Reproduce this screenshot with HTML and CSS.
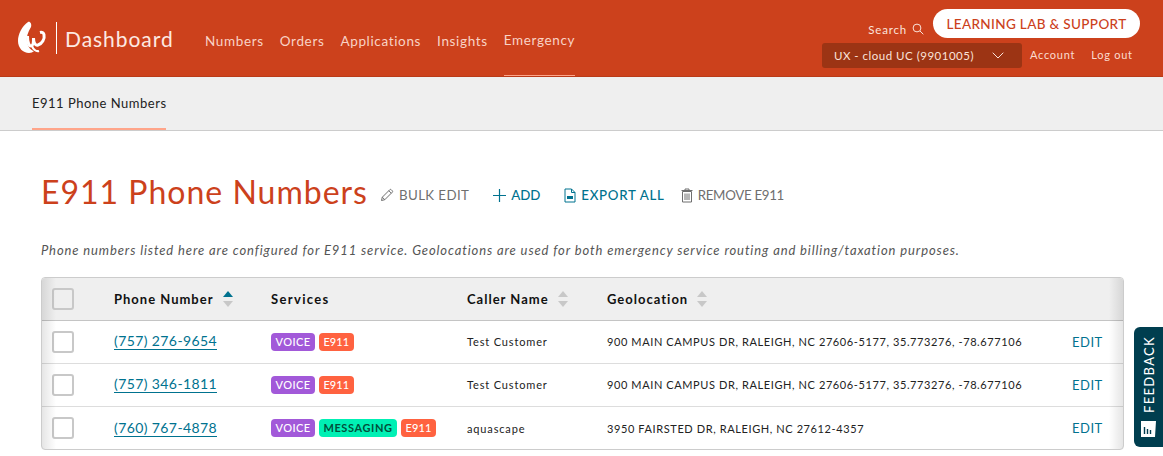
FILE: index.html
```html
<!DOCTYPE html>
<html lang="en">
<head>
<meta charset="utf-8">
<title>E911 Phone Numbers</title>
<link rel="stylesheet" href="styles.css">
</head>
<body>
<header class="topbar">
  <div class="brand">
    <svg class="logo" viewBox="0 0 30 34" width="30" height="34" aria-hidden="true">
      <path d="M10 1C4 5 0 13 0 20c0 7 5 12 11 12 2 0 4-1 5-2-3-.5-6-4-7-9-1-5 1-10 4-15 1-3-1-6-3-5z" fill="#fff"/>
      <path d="M9.500 15c0 6 1.500 10 3.500 10s2.500-5 2.500-8c0 4 1.500 8 4.500 7 4-1 7-6 6-10.500-.4-1.800-2-2.500-4-2" fill="none" stroke="#fff" stroke-width="3"/>
      <path d="M14 25c1 3 4 6 7 5" fill="none" stroke="#fff" stroke-width="2.200"/>
    </svg>
    <span class="brand-rule"></span>
    <span class="brand-name">Dashboard</span>
  </div>
  <nav class="mainnav">
    <a class="navlink">Numbers</a>
    <a class="navlink">Orders</a>
    <a class="navlink">Applications</a>
    <a class="navlink">Insights</a>
    <a class="navlink navlink-active">Emergency</a>
  </nav>
  <div class="utility">
    <div class="utility-top">
      <span class="search">Search
        <svg viewBox="0 0 12 12" width="12" height="12" aria-hidden="true"><circle cx="5" cy="5" r="3.900" fill="none" stroke="#fbe3da" stroke-width="1"/><path d="M8 8l3.300 3.300" stroke="#fbe3da" stroke-width="1" fill="none"/></svg>
      </span>
      <a class="support">LEARNING LAB &amp; SUPPORT</a>
    </div>
    <div class="utility-bottom">
      <div class="account-select">
        <span>UX - cloud UC (9901005)</span>
        <svg viewBox="0 0 12 7" width="12" height="7" aria-hidden="true"><path d="M.7.7L6 6l5.300-5.300" fill="none" stroke="#fbe3da" stroke-width="1"/></svg>
      </div>
      <a class="utility-link">Account</a>
      <a class="utility-link">Log out</a>
    </div>
  </div>
</header>
<div class="subnav"><a class="subnav-item">E911 Phone Numbers</a></div>
<main class="content">
  <div class="title-row">
    <h1 class="title">E911 Phone Numbers</h1>
    <a class="action action-grey action-bulk">
      <svg viewBox="0 0 14 14" width="14" height="14" aria-hidden="true"><path d="M1.500 12.500l.8-3.300L9.800 1.700a1 1 0 0 1 1.400 0l1.100 1.100a1 1 0 0 1 0 1.400L4.800 11.700zM2.300 9.200l2.500 2.500M8.800 2.700l2.500 2.500" fill="none" stroke="#6f6f6f"/></svg>
      BULK EDIT</a>
    <a class="action action-teal action-add">
      <svg viewBox="0 0 13 13" width="13" height="13" aria-hidden="true"><path d="M6.500 0v13M0 6.500h13" stroke="#00728f" stroke-width="1.200"/></svg>
      ADD</a>
    <a class="action action-teal action-export">
      <svg viewBox="0 0 12 15" width="12" height="15" aria-hidden="true"><path d="M1 1h6.500L11 4.500V14H1zM7.500 1v3.500H11" fill="none" stroke="#00728f"/><path d="M3 8h6v3H3z" fill="#00728f"/></svg>
      EXPORT ALL</a>
    <a class="action action-grey action-remove">
      <svg viewBox="0 0 12 15" width="12" height="15" aria-hidden="true"><path d="M1.500 3.500h9V14h-9zM.5 2.500h11M4 2.500V1h4v1.500M4 5.500V12M6 5.500V12M8 5.500V12" fill="none" stroke="#6f6f6f"/></svg>
      REMOVE E911</a>
  </div>
  <p class="intro">Phone numbers listed here are configured for E911 service. Geolocations are used for both emergency service routing and billing/taxation purposes.</p>
  <div class="table">
    <div class="row row-head">
      <div class="cell-check"><span class="checkbox checkbox-head"></span></div>
      <div class="cell-phone">Phone Number <span class="sort sort-asc"></span></div>
      <div class="cell-services">Services</div>
      <div class="cell-caller">Caller Name <span class="sort"></span></div>
      <div class="cell-geo">Geolocation <span class="sort"></span></div>
    </div>
    <div class="row">
      <div class="cell-check"><span class="checkbox"></span></div>
      <div class="cell-phone"><a class="phone">(757) 276-9654</a></div>
      <div class="cell-services"><span class="tag tag-voice">VOICE</span><span class="tag tag-e911">E911</span></div>
      <div class="cell-caller">Test Customer</div>
      <div class="cell-geo">900 MAIN CAMPUS DR, RALEIGH, NC 27606-5177, 35.773276, -78.677106</div>
      <a class="edit">EDIT</a>
    </div>
    <div class="row">
      <div class="cell-check"><span class="checkbox"></span></div>
      <div class="cell-phone"><a class="phone">(757) 346-1811</a></div>
      <div class="cell-services"><span class="tag tag-voice">VOICE</span><span class="tag tag-e911">E911</span></div>
      <div class="cell-caller">Test Customer</div>
      <div class="cell-geo">900 MAIN CAMPUS DR, RALEIGH, NC 27606-5177, 35.773276, -78.677106</div>
      <a class="edit">EDIT</a>
    </div>
    <div class="row row-last">
      <div class="cell-check"><span class="checkbox"></span></div>
      <div class="cell-phone"><a class="phone">(760) 767-4878</a></div>
      <div class="cell-services"><span class="tag tag-voice">VOICE</span><span class="tag tag-msg">MESSAGING</span><span class="tag tag-e911">E911</span></div>
      <div class="cell-caller">aquascape</div>
      <div class="cell-geo">3950 FAIRSTED DR, RALEIGH, NC 27612-4357</div>
      <a class="edit">EDIT</a>
    </div>
  </div>
</main>
<a class="feedback">
  <span class="feedback-text">FEEDBACK</span>
  <svg viewBox="0 0 15 16" width="15" height="16" aria-hidden="true"><path d="M0 0h15l-1 16H0z" fill="#fff"/><path d="M3.500 6v7M6.500 8v5M9.500 9v4" stroke="#003e4f" stroke-width="1.400"/></svg>
</a>
</body>
</html>
```
FILE: styles.css
```css
* { box-sizing: border-box; }
html, body { margin: 0; padding: 0; }
body {
  width: 1163px;
  height: 456px;
  overflow: hidden;
  background: #fff;
  font-family: "Lato", "Liberation Sans", sans-serif;
  color: #222;
  position: relative;
}
a { color: inherit; text-decoration: none; }

.topbar {
  height: 77px;
  background: #cc411c;
  display: flex;
  align-items: stretch;
  border-bottom: 1px solid #b93a18;
}
.brand {
  display: flex;
  align-items: center;
  width: 205px;
  padding-left: 18px;
  color: #fff;
}
.logo { margin-right: 8px; }
.brand-rule { width: 1px; height: 32px; background: #fff; margin-right: 8px; }
.brand-name { font-size: 21px; letter-spacing: .95px; color: #fde9e2; }

.mainnav { display: flex; gap: 16px; align-items: stretch; }
.navlink {
  display: flex;
  align-items: center;
  font-size: 13.500px;
  letter-spacing: .65px;
  color: #f9d3c6;
  padding-top: 5px;
  height: 76px;
}
.navlink-active { border-bottom: 1px solid #ffa58a; }

.utility {
  margin-left: auto;
  width: 341px;
  display: flex;
  flex-direction: column;
  padding-top: 9px;
}
.utility-top {
  display: flex;
  align-items: center;
  justify-content: flex-end;
  padding-right: 23px;
  gap: 9px;
}
.search {
  display: flex;
  align-items: center;
  gap: 5px;
  font-size: 11.500px;
  letter-spacing: .8px;
  color: #fbe3da;
  padding-top: 11px;
}
.support {
  background: #fff;
  color: #cc411c;
  border-radius: 15px;
  width: 207px;
  height: 29px;
  display: flex;
  align-items: center;
  justify-content: center;
  font-size: 13.500px;
  font-weight: 500;
  letter-spacing: .35px;
}
.utility-bottom { display: flex; align-items: center; margin-top: 5px; }
.account-select {
  width: 200px;
  height: 25px;
  background: #9c3414;
  border-radius: 3px;
  color: #fbe3da;
  display: flex;
  align-items: center;
  justify-content: space-between;
  padding: 0 18px 0 12px;
  font-size: 11.500px;
  letter-spacing: .5px;
  margin-right: 8px;
}
.utility-link {
  font-size: 11px;
  letter-spacing: .75px;
  color: #fbdcd0;
  margin-right: 16px;
  margin-top: -2px;
}

.subnav {
  height: 54px;
  background: #efefef;
  border-bottom: 1px solid #ccc;
  padding-left: 32px;
  display: flex;
}
.subnav-item {
  height: 53px;
  width: 134px;
  display: flex;
  align-items: center;
  font-size: 13px;
  letter-spacing: .5px;
  color: #222;
  border-bottom: 2px solid #ffa58a;
  white-space: nowrap;
}

.content { padding: 0 39px 0 41px; }
.title-row { display: flex; align-items: center; height: 34px; margin-top: 43px; }
.title {
  margin: 0;
  font-size: 32px;
  font-weight: 400;
  letter-spacing: 1px;
  color: #cc411c;
  margin-right: 12px;
  white-space: nowrap;
}
.action {
  display: flex;
  align-items: center;
  gap: 5px;
  font-size: 13.300px;
  letter-spacing: .4px;
  white-space: nowrap;
  padding-top: 8px;
}
.action-grey { color: #6f6f6f; }
.action-teal { color: #00728f; font-weight: 500; }
.action-bulk { margin-right: 24px; }
.action-add { margin-right: 24px; letter-spacing: -.1px; }
.action-export { margin-right: 16px; letter-spacing: .7px; }
.action-remove { letter-spacing: -.3px; }

.intro {
  margin: 34px 0 0;
  font-size: 13px;
  font-style: italic;
  letter-spacing: .885px;
  line-height: 16px;
  color: #555;
  white-space: nowrap;
}

.table {
  margin-top: 19px;
  width: 1083px;
  height: 173px;
  border: 1px solid #ccc;
  border-radius: 4px;
  overflow: hidden;
  position: relative;
}
.table::before, .table::after {
  content: "";
  position: absolute;
  top: 0;
  bottom: 0;
  width: 14px;
  pointer-events: none;
}
.table::before { left: 0; background: linear-gradient(to right, rgba(0,0,0,.1), rgba(0,0,0,0)); }
.table::after { right: 0; background: linear-gradient(to left, rgba(0,0,0,.1), rgba(0,0,0,0)); }

.row {
  height: 43px;
  display: flex;
  align-items: center;
  border-bottom: 1px solid #ddd;
  padding-bottom: 1px;
  font-size: 11px;
  letter-spacing: .6px;
  color: #222;
}
.row-last { border-bottom: 0; }
.row-head {
  height: 43px;
  background: #efefef;
  border-bottom: 1px solid #c4c4c4;
  font-size: 13px;
  font-weight: 700;
  letter-spacing: 1px;
  color: #111;
}
.cell-check { width: 72px; padding-left: 10px; display: flex; }
.cell-phone { width: 157px; display: flex; align-items: center; gap: 4px; }
.cell-services { width: 196px; display: flex; gap: 4px; }
.row-head .cell-services { letter-spacing: 1.350px; }
.cell-caller { width: 140px; display: flex; align-items: center; gap: 4px; }
.row:not(.row-head) .cell-caller { letter-spacing: .85px; }
.cell-geo { width: 465px; display: flex; align-items: center; gap: 4px; white-space: nowrap; }
.edit { font-size: 13px; letter-spacing: .5px; color: #00728f; }

.checkbox {
  width: 22px;
  height: 22px;
  background: #fff;
  border: 2px solid #c8c8c8;
  border-radius: 3px;
  display: block;
}
.checkbox-head { background: #efefef; }

.sort {
  display: inline-block;
  position: relative;
  width: 11px;
  height: 16px;
  margin-left: 5px;
}
.sort::before, .sort::after {
  content: "";
  position: absolute;
  left: 0;
  border-left: 5.500px solid transparent;
  border-right: 5.500px solid transparent;
}
.sort::before { top: 0; border-bottom: 6px solid #c8c8c8; }
.sort::after { bottom: 0; border-top: 6px solid #c8c8c8; }
.sort-asc::before { border-bottom-color: #00728f; }

.phone {
  font-size: 14px;
  letter-spacing: .4px;
  color: #00728f;
  border-bottom: 1px solid #00728f;
  line-height: 16px;
}

.tag {
  height: 18px;
  padding: 0 4.500px;
  border-radius: 4px;
  font-size: 11px;
  font-weight: 500;
  letter-spacing: .4px;
  line-height: 18px;
  color: #fff;
}
.tag-voice { background: #a259d9; }
.tag-e911 { background: #ff6240; letter-spacing: .1px; }
.tag-msg { background: #00f0b4; color: #00503c; font-weight: 700; letter-spacing: .6px; }

.feedback {
  position: absolute;
  right: 0;
  top: 327px;
  width: 29px;
  height: 120px;
  background: #003e4f;
  border-radius: 6px 0 0 6px;
  color: #fff;
  display: flex;
  flex-direction: column;
  align-items: center;
  justify-content: flex-end;
  padding-bottom: 10px;
  gap: 8px;
}
.feedback-text {
  writing-mode: vertical-rl;
  transform: rotate(180deg);
  font-size: 13px;
  letter-spacing: 1.300px;
  font-weight: 500;
}
```
